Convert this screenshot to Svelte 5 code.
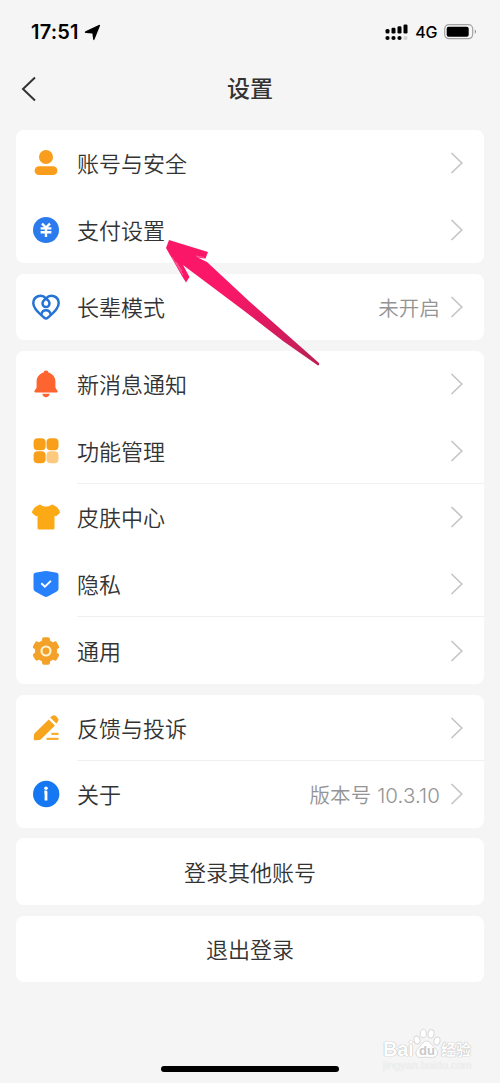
<script lang="ts">
	interface Row {
		icon: string;
		label: string;
		value?: string;
		divider?: boolean;
	}

	const groups: Row[][] = [
		[
			{ icon: 'account', label: '账号与安全' },
			{ icon: 'payment', label: '支付设置' }
		],
		[{ icon: 'elder', label: '长辈模式', value: '未开启' }],
		[
			{ icon: 'bell', label: '新消息通知' },
			{ icon: 'apps', label: '功能管理', divider: true },
			{ icon: 'shirt', label: '皮肤中心' },
			{ icon: 'shield', label: '隐私', divider: true },
			{ icon: 'gear', label: '通用' }
		],
		[
			{ icon: 'pencil', label: '反馈与投诉', divider: true },
			{ icon: 'info', label: '关于', value: '版本号 10.3.10' }
		]
	];

	const actions = ['登录其他账号', '退出登录'];
	const teeth = [0, 60, 120, 180, 240, 300];
</script>

{#snippet icon(name: string)}
	<svg class="icon" viewBox="0 0 30 30" aria-hidden="true">
		{#if name === 'account'}
			<circle cx="15" cy="9" r="7" fill="#fa9d1c" />
			<rect x="3.6" y="18.3" width="22.8" height="8.8" rx="4.4" fill="#fa9d1c" />
		{:else if name === 'payment'}
			<circle cx="15" cy="15" r="13" fill="#2b7bee" />
			<path d="m11 8.6 4 4 4-4M9.6 13.4h10.8M9.6 17.2h10.8M15 12.4V22" fill="none" stroke="#fff" stroke-width="2.4" />
		{:else if name === 'elder'}
			<g fill="none" stroke="#2673d6" stroke-width="2.5" stroke-linecap="round" stroke-linejoin="round">
				<path d="M15 6.3C10.5 1.5 2.3 4 2.3 11.3c0 6 6.7 10.7 11 14.5q1.7 1.3 3.4 0c4.3-3.8 11-8.5 11-14.5C27.7 4 19.5 1.5 15 6.3Z" />
				<path d="M15 6.3c-2 1.7-3.5 3.3-3.5 5.3a3.5 3.5 0 0 0 7 0c0-2-1.500-3.600-3.500-5.300Z" />
				<path d="M10.300 22.500c1.200-5.600 8.200-5.600 9.400 0" />
			</g>
		{:else if name === 'bell'}
			<path d="M15 1.500c1.500 0 2.300.8 2.400 2 4 1.200 7 4.500 7 9v6.300l2.200 3.300q.5 1.400-1 1.400H4.400q-1.500 0-1-1.400L5.600 18.800v-6.300c0-4.500 3-7.800 7-9 .1-1.200.9-2 2.400-2Z" fill="#fd642f" />
			<path d="M11.300 24.800h7.400c-.4 2.200-1.800 3.400-3.700 3.400s-3.300-1.200-3.700-3.400Z" fill="#fd642f" />
		{:else if name === 'apps'}
			<rect x="2.6" y="2.3" width="12" height="12" rx="4" fill="#f9a01b" />
			<rect x="15.5" y="2.3" width="12" height="12" rx="4" fill="#f9a01b" />
			<rect x="2.6" y="15.2" width="12" height="12" rx="4" fill="#f9a01b" />
			<rect x="15.5" y="15.2" width="12" height="12" rx="4" fill="#fdc97e" />
		{:else if name === 'shirt'}
			<path d="M8.200 2.700q.9-.4 1.800.2c2.700 2.200 7.300 2.200 10 0q.9-.6 1.800-.2c3.200 1.300 5.700 3.500 7.200 7q.3 1-.5 1.600l-2.800 2.500q-.8.600-1.700.1L23.500 13.500V26q0 1.500-1.500 1.500H8q-1.500 0-1.500-1.500V13.500L6 13.900q-.9.500-1.700-.1l-2.800-2.500q-.8-.6-.5-1.600c1.500-3.500 4-5.700 7.200-7Z" fill="#fca916" />
		{:else if name === 'shield'}
			<path d="M15 2q1.200 0 2.200.2l8.700 1.500q1.600.4 1.600 2v14q0 1.800-1.700 2.800l-9.100 5q-1.700.9-3.400 0l-9.100-5q-1.700-1-1.700-2.800v-14q0-1.600 1.600-2l8.700-1.500Q13.800 2 15 2Z" fill="#2781fc" />
			<path d="m10.300 14.300 3.600 3.400 6-5.800" fill="none" stroke="#fff" stroke-width="2" />
		{:else if name === 'gear'}
			<circle cx="15" cy="15" r="11" fill="#f3a129" />
			{#each teeth as angle}
				<rect x="11" y="1.3" width="8" height="8" rx="2" fill="#f3a129" transform="rotate({angle} 15 15)" />
			{/each}
			<circle cx="15" cy="15" r="4.5" fill="#f3a129" stroke="#fff3d2" stroke-width="2.2" />
		{:else if name === 'pencil'}
			<path d="M17.700 6.400 23.900 12.400 10.300 26q-.8.800-1.800.9l-4.300.4q-1.500 0-1.500-1.400l.3-4q.1-1.200.9-2Z" fill="#f7a51f" />
			<path d="m19.200 4.500 1.700-1.400q2-1.600 3.700-.3l2.200 2.300q1.500 1.800 0 3.700l-1.500 1.800Z" fill="#f7a51f" />
			<path d="M15.500 25.900h12M20.300 20.900h7.200" stroke="#f9ae32" stroke-width="2.2" />
		{:else if name === 'info'}
			<circle cx="15.2" cy="15" r="13.2" fill="#1677f2" />
			<circle cx="15" cy="9.2" r="1.8" fill="#fff" />
			<path d="M13.300 13H15v8.500" fill="none" stroke="#fff" stroke-width="2.8" stroke-linejoin="round" />
		{/if}
	</svg>
{/snippet}

<div class="screen">
	<header class="status-bar">
		<div class="clock">
			<span class="time">17:51</span>
			<svg width="17" height="17" viewBox="0 0 17 17" aria-hidden="true">
				<path d="M14.800 1q1.700-.7 1.100 1L10.600 15.300q-1 1.900-1.500-.2L8.400 9.400 2 8.900Q-.2 8.400 1.500 7.300Z" />
			</svg>
		</div>
		<div class="network">
			<svg width="23" height="17" viewBox="0 0 23 17" aria-hidden="true">
				<rect x="0.5" y="5" width="4" height="4.6" rx="1.5" />
				<rect x="6.5" y="3.8" width="4" height="5.8" rx="1.3" />
				<rect x="12.5" y="2.2" width="4" height="7.4" rx="1.3" />
				<rect x="18.5" y="0.5" width="4" height="9.1" rx="1.3" />
				<circle cx="2.5" cy="14" r="2.1" />
				<circle cx="8.5" cy="14" r="2.1" />
				<circle cx="14.5" cy="14" r="2.1" />
				<circle cx="20.5" cy="14" r="2.1" fill="#d4d4d4" />
			</svg>
			<span class="carrier">4G</span>
			<svg width="33" height="17" viewBox="0 0 33 17" aria-hidden="true">
				<rect x="0.7" y="0.7" width="28" height="14" rx="4.2" fill="none" stroke="#a3a3a3" stroke-width="1.2" />
				<rect x="2.7" y="2.7" width="22" height="10" rx="2" />
				<path d="M30.800 5.500q2.400 2.200 0 4.400Z" fill="#888" />
			</svg>
		</div>
	</header>

	<nav class="nav-bar">
		<button class="back" aria-label="返回">
			<svg width="16" height="26" viewBox="0 0 16 26">
				<path d="M14 1.500 2 13l12 11.500" fill="none" stroke="#333" stroke-width="2" />
			</svg>
		</button>
		<h1>设置</h1>
	</nav>

	<main>
		{#each groups as group}
			<section class="card">
				{#each group as row}
					<div class="row">
						{@render icon(row.icon)}
						<div class="row-body" class:divider={row.divider}>
							<span class="label">{row.label}</span>
							{#if row.value}
								<span class="value">{row.value}</span>
							{/if}
							<svg width="13" height="22" viewBox="0 0 13 22" aria-hidden="true">
								<path d="M1.500 1 11.800 11 1.500 21" fill="none" stroke="#c6c6c6" stroke-width="1.7" />
							</svg>
						</div>
					</div>
				{/each}
			</section>
		{/each}

		{#each actions as action}
			<button class="card action">{action}</button>
		{/each}
	</main>

	<!-- Red pointer over the payment row -->
	<svg class="pointer" width="160" height="132" viewBox="0 0 160 132" aria-hidden="true">
		<defs>
			<linearGradient id="shaft" x1="0" y1="0" x2="1" y2="1">
				<stop offset="0.4" stop-color="#fa1768" />
				<stop offset="1" stop-color="#b91f55" />
			</linearGradient>
		</defs>
		<path d="M5 2 44 14l-2.500 6.500q-7 0-13-3.500L43 24 86 64l69 61q.8 2-1 2.500L119 103 79 72 19 27 25.500 39l-3.500 5.500L18 38 2 10Z" fill="url(#shaft)" />
		<path d="m8 19 11 18M12 24l6 9M32 18l8 1.500" fill="none" stroke="#fff" stroke-width="0.6" opacity="0.5" />
	</svg>

	<!-- Watermark -->
	<div class="watermark">
		<div class="brand">
			<span class="bai">Bai</span>
			<span class="paw">
				<svg width="28" height="31" viewBox="0 0 28 31" aria-hidden="true">
					<g fill="#fff" stroke="#d9d9d9" stroke-width="1">
						<ellipse cx="4" cy="12" rx="3" ry="4" transform="rotate(-12 4 12)" />
						<ellipse cx="10.3" cy="5.5" rx="3" ry="4.2" />
						<ellipse cx="18" cy="5.8" rx="3" ry="4.2" transform="rotate(12 18 5.8)" />
						<ellipse cx="24" cy="13" rx="3" ry="4" transform="rotate(12 24 13)" />
						<path d="M13.500 13c3 0 4.500 3 7 5.500 3 2.700 5.300 5.500 3.500 8.700-2 3.400-6.500 2-10.500 2s-8 1.400-10-2c-1.800-3.200.5-6 3.300-8.700 2.600-2.500 3.700-5.500 6.700-5.500Z" />
					</g>
				</svg>
				<span class="du">du</span>
			</span>
			<span class="jingyan">经验</span>
		</div>
		<div class="domain">jingyan.baidu.com</div>
	</div>

	<div class="home-indicator"></div>
</div>

<style>
	:global(body) {
		background: #f5f5f5;
	}

	.screen {
		position: relative;
		display: flex;
		flex-direction: column;
		width: 500px;
		height: 1083px;
		overflow: hidden;
		background: #f5f5f5;
		color: #333;
		font-family: 'Liberation Sans', 'Noto Sans CJK SC', sans-serif;
	}

	.status-bar {
		display: flex;
		align-items: center;
		justify-content: space-between;
		height: 64px;
		padding: 0 23px 0 31px;
		color: #000;
	}

	.clock,
	.network {
		display: flex;
		align-items: center;
	}

	.clock {
		gap: 5px;
	}

	.time {
		font: 600 20px/24px Inter, sans-serif;
		letter-spacing: 0.2px;
	}

	.carrier {
		margin: 0 7px;
		font: 500 16px/20px Inter, sans-serif;
		letter-spacing: -0.4px;
	}

	.nav-bar {
		display: grid;
		grid-template-columns: 60px 1fr 60px;
		align-items: center;
		height: 50px;
		margin-bottom: 16px;
	}

	.back {
		display: flex;
		padding: 0 0 0 21px;
		border: none;
		background: none;
	}

	h1 {
		margin: 0;
		font-size: 23px;
		font-weight: 500;
		line-height: 50px;
		text-align: center;
	}

	main {
		display: flex;
		flex-direction: column;
		gap: 10.6px;
		padding: 0 16px;
	}

	.card {
		border-radius: 8px;
		background: #fff;
	}

	.row {
		display: flex;
		align-items: center;
		height: 66.6px;
		padding-left: 15px;
	}

	.icon {
		flex-shrink: 0;
		width: 30px;
		height: 30px;
		margin-right: 16px;
	}

	.row-body {
		display: flex;
		flex: 1;
		align-items: center;
		height: 100%;
		padding-right: 21px;
	}

	.row-body.divider {
		box-shadow: inset 0 -1px #f0f0f0;
	}

	.label {
		flex: 1;
		padding-bottom: 2px;
		font-size: 22px;
		font-weight: 350;
	}

	.value {
		margin-right: 10px;
		color: #949494;
		font-family: Inter, 'Noto Sans CJK SC', sans-serif;
		font-size: 20.5px;
		font-weight: 350;
		letter-spacing: 0.1px;
	}

	.action {
		height: 66.6px;
		padding: 0 0 2px;
		border: none;
		color: #333;
		font-family: inherit;
		font-size: 22px;
		font-weight: 350;
	}

	.pointer {
		position: absolute;
		top: 238px;
		left: 164px;
	}

	.watermark {
		position: absolute;
		top: 1028px;
		left: 383px;
		width: 92px;
		color: #fff;
		text-shadow: 0 0 1px #aaa, 0 0 1px #bbb;
	}

	.brand {
		display: flex;
		align-items: flex-end;
		height: 31px;
	}

	.bai {
		width: 30px;
		font: bold 20px/20px 'Liberation Sans', sans-serif;
		letter-spacing: -0.3px;
	}

	.paw {
		display: flex;
		position: relative;
	}

	.du {
		position: absolute;
		bottom: 1px;
		left: 6px;
		color: #c9c9c9;
		font: bold 13px/14px 'Liberation Sans', sans-serif;
		text-shadow: none;
	}

	.jingyan {
		font: bold 15px/20px 'Noto Sans CJK SC', sans-serif;
	}

	.domain {
		color: #f1f1f1;
		font-size: 11px;
		line-height: 12px;
		text-shadow: 0 0 1px #ddd;
	}

	.home-indicator {
		position: absolute;
		bottom: 11px;
		left: 161px;
		width: 178px;
		height: 6px;
		border-radius: 3px;
		background: #000;
	}
</style>
